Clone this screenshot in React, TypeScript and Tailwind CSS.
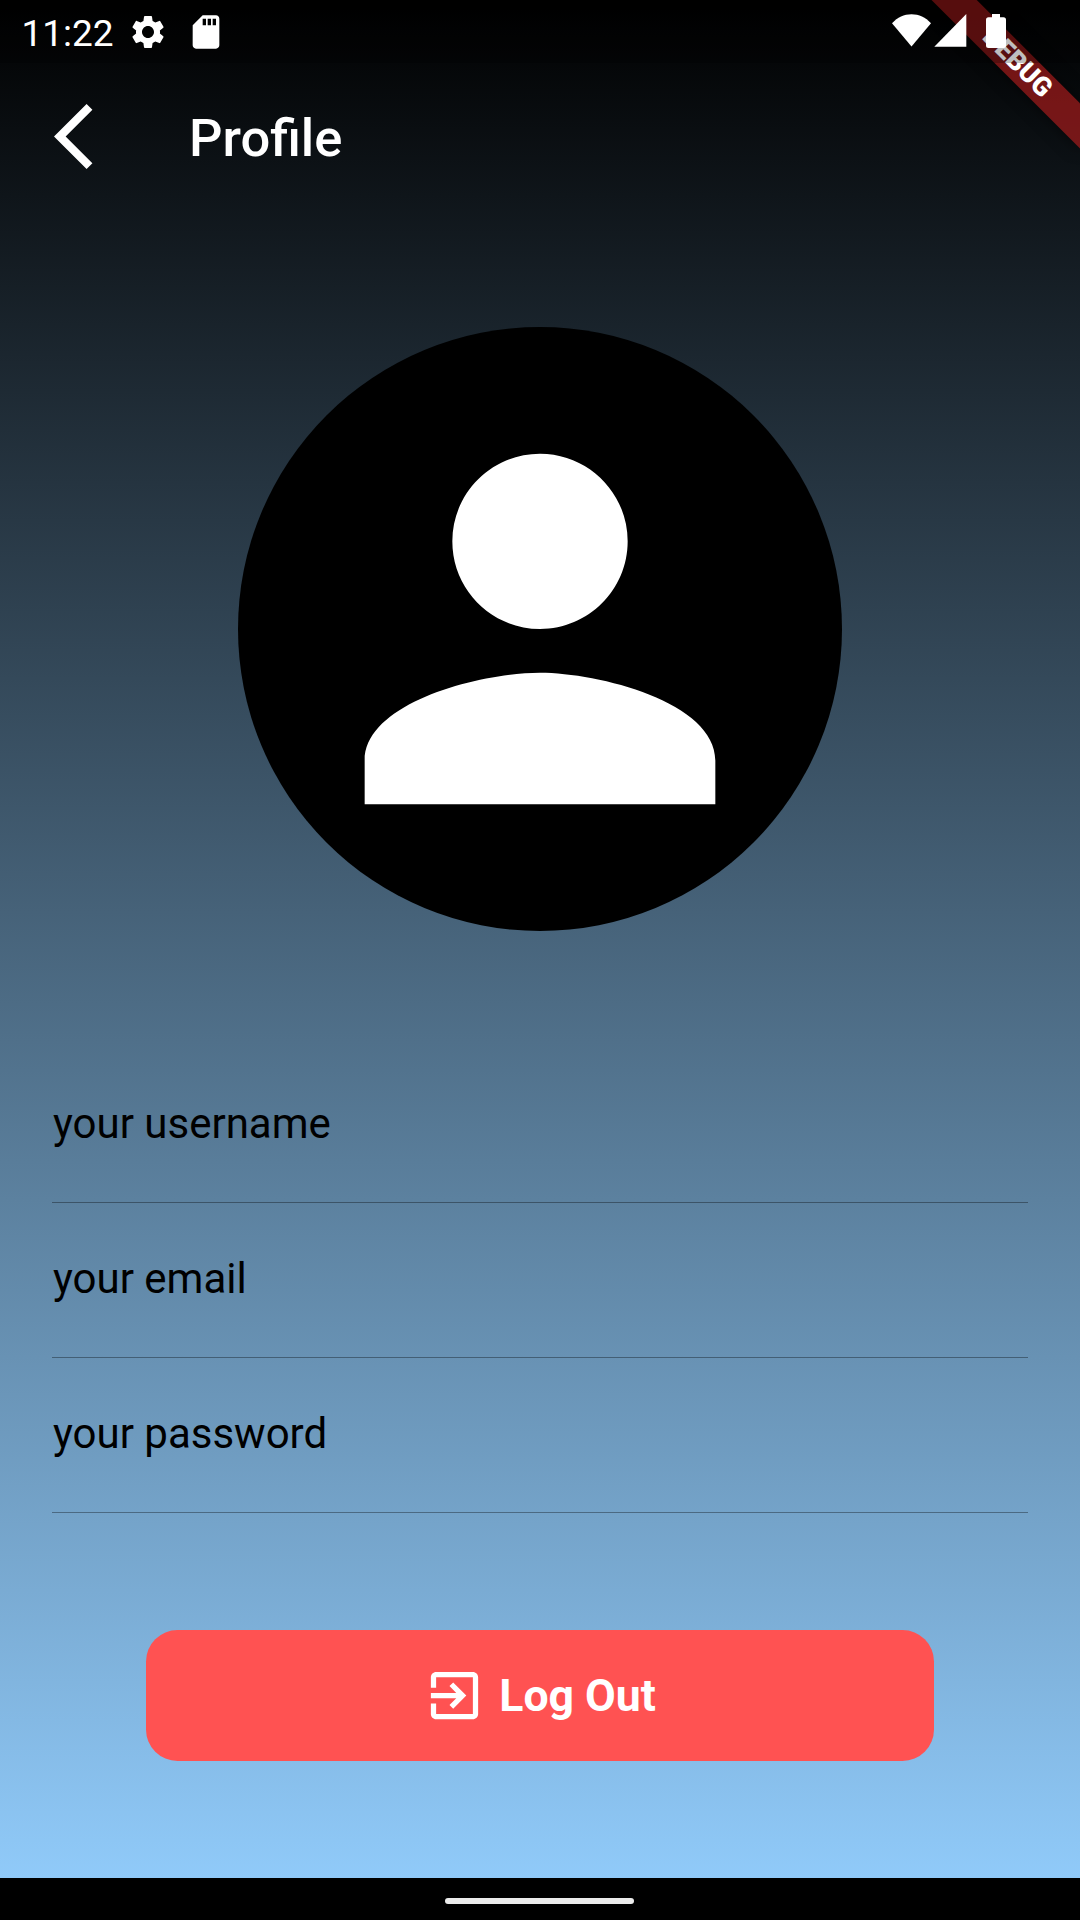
import React from "react";

const fields = ["your username", "your email", "your password"];

function StatusBar() {
  return (
    <div className="absolute inset-x-0 top-0 flex h-[63px] bg-black/25 text-white">
      <span className="ml-[21.500px] mt-[12px] w-[98.500px] text-[37px] leading-[44px]">11:22</span>
      <svg className="ml-[8px] mt-[11.500px] size-[40px]" viewBox="0 0 24 24" fill="currentColor">
        <path d="M19.14 12.94c.04-.3.06-.61.06-.94 0-.32-.02-.64-.07-.94l2.03-1.58a.49.49 0 0 0 .12-.61l-1.92-3.32a.488.488 0 0 0-.59-.22l-2.39.96c-.5-.38-1.03-.7-1.62-.94l-.36-2.54a.484.484 0 0 0-.48-.41h-3.84c-.24 0-.43.17-.47.41l-.36 2.54c-.59.24-1.13.57-1.62.94l-2.39-.96c-.22-.08-.47 0-.59.22L2.74 8.87c-.12.21-.08.47.12.61l2.03 1.58c-.05.3-.09.63-.09.94s.02.64.07.94l-2.03 1.58a.49.49 0 0 0-.12.61l1.92 3.32c.12.22.37.29.59.22l2.39-.96c.5.38 1.03.7 1.62.94l.36 2.54c.05.24.24.41.48.41h3.84c.24 0 .44-.17.47-.41l.36-2.54c.59-.24 1.13-.56 1.62-.94l2.39.96c.22.08.47 0 .59-.22l1.92-3.32c.12-.22.07-.47-.12-.61l-2.01-1.58zM12 15.6c-1.98 0-3.6-1.62-3.6-3.6s1.62-3.6 3.6-3.6 3.6 1.62 3.6 3.6-1.62 3.6-3.6 3.6z" />
      </svg>
      <svg className="ml-[18px] mt-[11.500px] size-[40px]" viewBox="0 0 24 24" fill="currentColor">
        <path d="M18 2h-8L4.02 8 4 20c0 1.100.9 2 2 2h12c1.100 0 2-.9 2-2V4c0-1.100-.9-2-2-2zm-6 6h-2V4h2v4zm3 0h-2V4h2v4zm3 0h-2V4h2v4z" />
      </svg>
      <div className="ml-auto mr-[74px] mt-[14px] flex">
        <svg className="h-[33px] w-[39px]" viewBox="0 0 39 33" fill="currentColor">
          <path d="M0 9.200C5.500 3.200 12 .2 19.500.2S33.500 3.200 39 9.200L19.500 32.500Z" />
        </svg>
        <svg className="ml-[3px] h-[33px] w-[33px]" viewBox="0 0 33 33" fill="currentColor">
          <path d="M.3 32.800L32.300 0V32.800Z" />
        </svg>
        <svg className="ml-[19px] h-[34px] w-[20px]" viewBox="0 0 20 34" fill="currentColor">
          <path d="M6 0h8v3.300h3.500A2.500 2.500 0 0 1 20 5.800V31.500A2.500 2.500 0 0 1 17.500 34h-15A2.500 2.500 0 0 1 0 31.500V5.800A2.500 2.500 0 0 1 2.500 3.300H6Z" />
        </svg>
      </div>
    </div>
  );
}

function DebugBanner() {
  return (
    <div className="absolute right-0 top-0 size-[200px] overflow-hidden">
      <div className="absolute left-[95px] top-[73px] flex h-[31.500px] w-[210px] origin-[105px_-73px] rotate-45 items-center justify-center bg-[#b71c1c]/[.627] text-[26.775px] font-black leading-none text-white shadow-[0_0_16px_rgba(0,0,0,0.5)]">
        DEBUG
      </div>
    </div>
  );
}

export default function App() {
  return (
    <div className="relative flex h-[1920px] w-[1080px] flex-col overflow-hidden bg-black font-['Roboto',sans-serif]">
      <main className="flex h-[1878px] flex-col bg-[linear-gradient(to_bottom,#000000,#90caf9)]">
        <header className="mt-[63px] flex h-[147px] items-center pl-[54px] text-white">
          <svg className="size-[79px]" viewBox="0 0 24 24" fill="currentColor">
            <path d="M11.670 3.870L9.900 2.100 0 12l9.900 9.900 1.770-1.770L3.540 12z" />
          </svg>
          <h1 className="ml-[56px] pt-[2px] text-[52.500px] font-medium leading-[62px]">Profile</h1>
        </header>
        <div className="mt-[117px] flex size-[603.750px] items-center justify-center self-center rounded-full bg-black">
          <svg className="size-[526px]" viewBox="0 0 24 24" fill="white">
            <path d="M12 12c2.210 0 4-1.790 4-4s-1.790-4-4-4-4 1.790-4 4 1.790 4 4 4zm0 2c-2.670 0-8 1.340-8 4v2h16v-2c0-2.660-5.330-4-8-4z" />
          </svg>
        </div>
        <div className="mx-[52px] mt-[117px] flex flex-col">
          {fields.map((label) => (
            <div key={label} className="flex h-[155px] items-center border-b border-black/35 text-[42px] leading-[50px] text-black">
              <span className="pb-[1px] pl-[1px]">{label}</span>
            </div>
          ))}
        </div>
        <button className="mt-[117.250px] flex h-[131px] w-[787.500px] items-center self-center rounded-[31.500px] bg-[#ff5252] pl-[277px] text-white">
          <svg className="size-[63px]" viewBox="0 0 24 24" fill="currentColor">
            <path d="M10.090 15.590L11.500 17l5-5-5-5-1.410 1.410L12.670 11H3v2h9.670l-2.580 2.590zM19 3H5c-1.110 0-2 .9-2 2v4h2V5h14v14H5v-4H3v4c0 1.100.89 2 2 2h14c1.100 0 2-.9 2-2V5c0-1.100-.9-2-2-2z" />
          </svg>
          <span className="ml-[13px] text-[44.600px] font-bold leading-[52px]">Log Out</span>
        </button>
      </main>
      <div className="flex h-[42px] bg-black pl-[445px] pt-[20px]">
        <div className="h-[6px] w-[189px] rounded-full bg-[#ebebeb]" />
      </div>
      <DebugBanner />
      <StatusBar />
    </div>
  );
}
